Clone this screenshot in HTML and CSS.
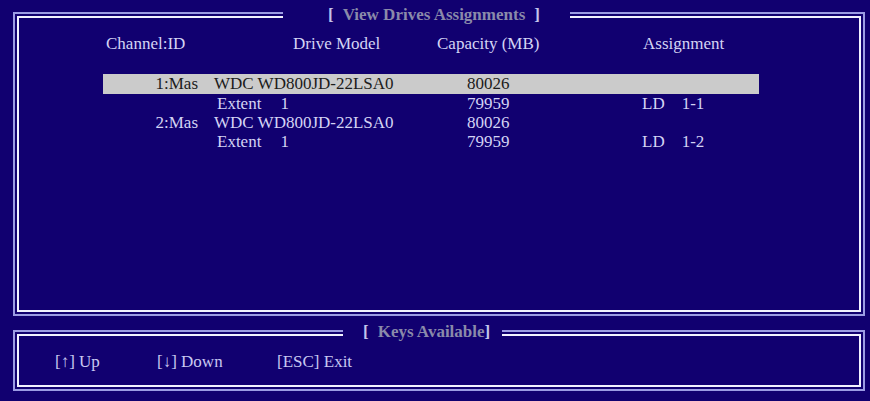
FILE: index.html
```html
<!DOCTYPE html>
<html>
<head>
<meta charset="utf-8">
<link rel="stylesheet" href="styles.css">
</head>
<body>
<div class="screen">
  <div class="panel main">
    <div class="panel-inner main-inner">
      <div class="head">
        <span>Channel:ID</span>
        <span>Drive Model</span>
        <span>Capacity (MB)</span>
        <span>Assignment</span>
      </div>
      <div class="list">
        <div class="row first selected">
          <span class="c1">1:Mas</span>
          <span class="c2">WDC WD800JD-22LSA0</span>
          <span class="c3">80026</span>
          <span class="c4"></span>
        </div>
        <div class="row">
          <span class="c1"></span>
          <span class="c2 ext">Extent<span class="num">1</span></span>
          <span class="c3">79959</span>
          <span class="c4">LD<span class="ld">1-1</span></span>
        </div>
        <div class="row">
          <span class="c1">2:Mas</span>
          <span class="c2">WDC WD800JD-22LSA0</span>
          <span class="c3">80026</span>
          <span class="c4"></span>
        </div>
        <div class="row">
          <span class="c1"></span>
          <span class="c2 ext">Extent<span class="num">1</span></span>
          <span class="c3">79959</span>
          <span class="c4">LD<span class="ld">1-2</span></span>
        </div>
      </div>
    </div>
    <div class="title title-top"><span class="br">[</span><span class="tt">View Drives Assignments</span><span class="br">]</span></div>
  </div>

  <div class="panel keys">
    <div class="panel-inner keys-inner">
      <span class="key k1">[↑] Up</span>
      <span class="key k2">[↓] Down</span>
      <span class="key k3">[ESC] Exit</span>
    </div>
    <div class="title title-bottom"><span class="br">[</span><span class="tt">Keys Available</span><span class="br">]</span></div>
  </div>
</div>
</body>
</html>
```

FILE: styles.css
```css
html, body {
  margin: 0;
  padding: 0;
  background: #110070;
}

body {
  width: 870px;
  height: 401px;
  overflow: hidden;
  font-family: "Liberation Serif", "Times New Roman", serif;
  font-size: 17px;
  color: #d4d4f4;
}

.screen {
  padding-top: 12px;
  padding-left: 13px;
}

.panel {
  position: relative;
  box-sizing: border-box;
  width: 852px;
  border: 2px solid #9c9ce4;
  padding: 2px;
}

.panel-inner {
  box-sizing: border-box;
  height: 100%;
  border: 2px solid #f2f2ff;
}

.main {
  height: 304px;
}

.keys {
  height: 61px;
  margin-top: 14px;
}

.main-inner {
  padding-top: 16px;
}

.head {
  display: grid;
  grid-template-columns: 187px 144px 206px auto;
  margin-left: 87px;
  line-height: 19px;
  white-space: nowrap;
}

.list {
  margin-top: 21px;
  margin-left: 84px;
  width: 656px;
}

.row {
  display: grid;
  grid-template-columns: 95px 253px 175px auto;
  height: 19px;
  line-height: 19px;
  white-space: nowrap;
}

.row.first {
  height: 20px;
  line-height: 20px;
}

.row.selected {
  background: #cbcbcb;
  color: #1c1c1c;
}

.c1 {
  text-align: right;
}

.c2 {
  padding-left: 16px;
}

.c2.ext {
  padding-left: 19px;
}

.num {
  margin-left: 19px;
}

.c3 {
  padding-left: 16px;
}

.c4 {
  padding-left: 16px;
}

.ld {
  margin-left: 17px;
}

.keys-inner {
  padding-top: 16px;
  padding-left: 36px;
  display: flex;
  line-height: 19px;
  color: #c8c8f0;
  white-space: nowrap;
}

.k1 { width: 102px; }
.k2 { width: 120px; }

.title {
  position: absolute;
  background: #110070;
  font-weight: bold;
  line-height: 20px;
  white-space: nowrap;
}

.title .br {
  color: #c4c4ec;
}

.title .tt {
  color: #8a8aaa;
  margin: 0 9px;
}

.title-top {
  top: -9px;
  left: 268px;
  padding-left: 45px;
  padding-right: 30px;
}

.title-bottom {
  top: -10px;
  left: 328px;
  padding-left: 20px;
  padding-right: 12px;
}

.title-bottom .tt {
  margin: 0 0 0 9px;
}
```
